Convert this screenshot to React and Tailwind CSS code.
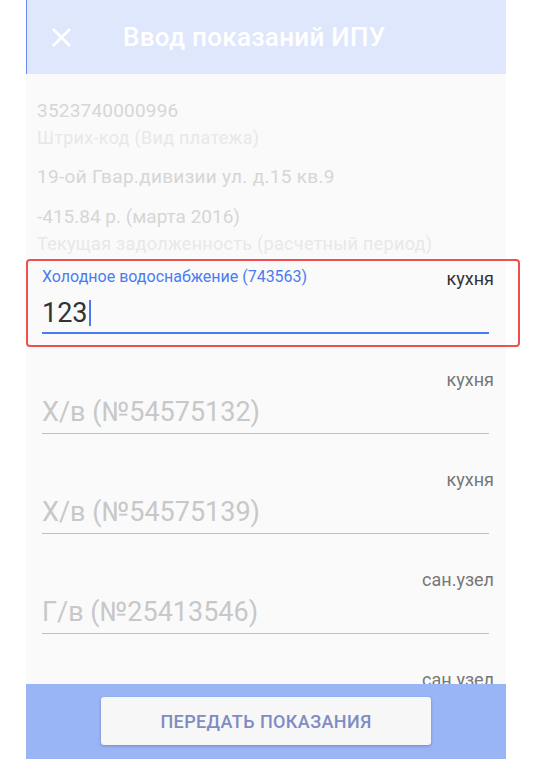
import React from "react";

const fields = [
  { place: "кухня", hint: "Х/в (№54575132)" },
  { place: "кухня", hint: "Х/в (№54575139)" },
  { place: "сан.узел", hint: "Г/в (№25413546)" },
  { place: "сан.узел", hint: "" },
];

const CloseIcon = () => (
  <svg viewBox="5 5 14 14" className="w-[19px] h-[19px]" fill="#ffffff">
    <path d="M19 6.41L17.59 5 12 10.59 6.41 5 5 6.41 10.59 12 5 17.59 6.41 19 12 13.41 17.59 19 19 17.59 13.41 12z" />
  </svg>
);

const App = () => {
  return (
    <div className="relative w-[540px] h-[759px] bg-white overflow-hidden font-['Roboto',sans-serif]">
      <div className="ml-[26px] w-[480px] h-[759px] flex flex-col">
        {/* Header */}
        <header className="h-[74px] shrink-0 flex items-center bg-[#dfe7fc] border-l border-[#6a8ef0]">
          <div className="ml-[25px] flex items-center">
            <CloseIcon />
          </div>
          <h1 className="ml-[52px] text-[26px] font-medium text-white leading-none tracking-[0.3px]">
            Ввод показаний ИПУ
          </h1>
        </header>

        {/* Content */}
        <main className="flex-1 overflow-hidden bg-[#fafafa]">
          <div className="px-[11px] pt-[25px]">
            <p className="text-[19px] leading-[24px] text-[#d6d6d6] tracking-[0.2px]">3523740000996</p>
            <p className="mt-[4px] text-[18px] leading-[22px] text-[#e8e8e8] tracking-[0.3px]">Штрих-код (Вид платежа)</p>
            <p className="mt-[16px] text-[19px] leading-[24px] text-[#d6d6d6] tracking-[0.3px]">19-ой Гвар.дивизии ул. д.15 кв.9</p>
            <p className="mt-[16px] text-[19px] leading-[24px] text-[#d6d6d6]">-415.84 р. (марта 2016)</p>
            <p className="mt-[4px] text-[18px] leading-[22px] text-[#e8e8e8] tracking-[0.3px]">Текущая задолженность (расчетный период)</p>
          </div>

          {/* Active field */}
          <div className="ml-[16px] mr-[17px] pt-[13px] pb-[3px] border-b-2 border-[#4a7cf0]">
            <div className="flex justify-between items-start -mr-[5px]">
              <span className="text-[16px] leading-[18px] text-[#4a7cf0]">Холодное водоснабжение (743563)</span>
              <span className="text-[18px] leading-[22px] text-[#333333]">кухня</span>
            </div>
            <div className="mt-[7px] h-[32px] flex items-center">
              <span className="text-[27px] leading-[32px] text-[#333333]">123</span>
              <span className="ml-[1px] w-[2px] h-[26px] bg-[#4a7cf0]" />
            </div>
          </div>

          {fields.map((f, i) => (
            <div key={i} className="ml-[16px] mr-[17px] pt-[35px] pb-[5px] border-b border-[#a9c1f7]">
              <div className="flex justify-end -mr-[5px]">
                <span className="text-[18px] leading-[22px] text-[#777777]">{f.place}</span>
              </div>
              <div className="mt-[5px] h-[32px]">
                {f.hint && <span className="text-[27px] leading-[32px] text-[#c8c8c8]">{f.hint}</span>}
              </div>
            </div>
          ))}
        </main>

        {/* Bottom bar */}
        <footer className="h-[75px] shrink-0 bg-[#99b5f6] flex justify-center pt-[13px]">
          <button className="w-[330px] h-[48px] rounded-[3px] bg-[#f7f7f7] shadow-[0_1px_3px_rgba(0,0,0,0.25)] text-[18px] font-medium text-[#7e8cc3] tracking-[0.4px]">
            ПЕРЕДАТЬ ПОКАЗАНИЯ
          </button>
        </footer>
      </div>

      {/* Highlight frame */}
      <div className="absolute top-[259px] left-[26px] w-[494px] h-[88px] border-2 border-[#f04f4f] rounded-[4px] pointer-events-none" />
    </div>
  );
};

export default App;
